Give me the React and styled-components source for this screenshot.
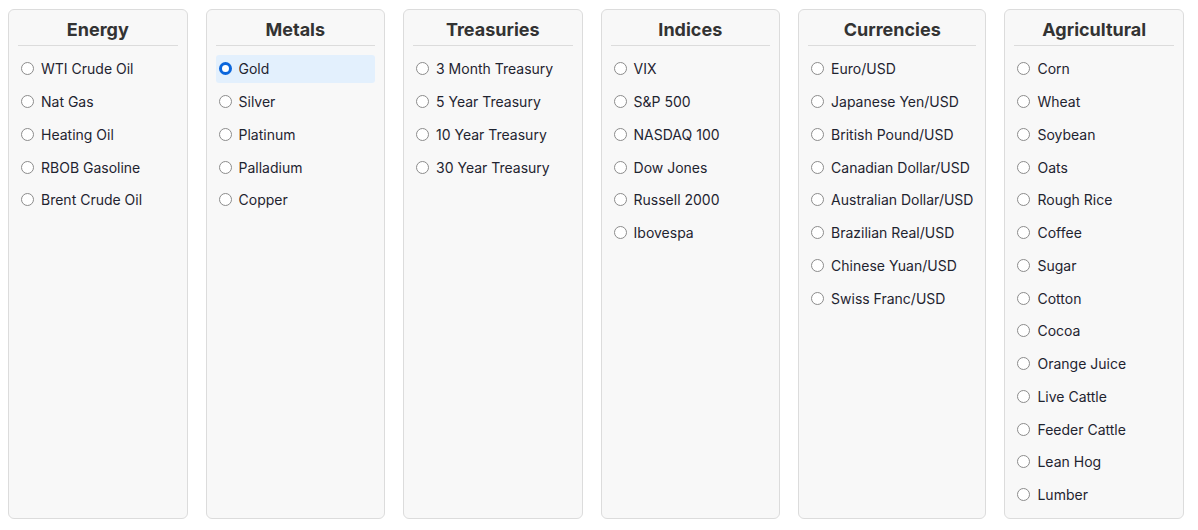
import React, { useState } from 'react';
import styled, { createGlobalStyle } from 'styled-components';

const GlobalStyles = createGlobalStyle`
  html, body {
    margin: 0;
    padding: 0;
    background: #fff;
  }
  body {
    font-family: Inter, "Noto Sans", "Liberation Sans", sans-serif;
    color: #1f2430;
  }
`;

const Board = styled.div`
  display: flex;
  gap: 18px;
  padding: 9px 14px 12px 8px;
  align-items: stretch;
`;

const Panel = styled.div`
  flex: 1 1 0;
  background: #f8f8f8;
  border: 1px solid #dcdcdc;
  border-radius: 6px;
  padding: 9px;
  display: flex;
  flex-direction: column;
`;

const Title = styled.h3`
  margin: 0;
  font-size: 18px;
  line-height: 22px;
  font-weight: 700;
  color: #333;
  text-align: center;
  padding-bottom: 4px;
  border-bottom: 1px solid #dcdcdc;
`;

const List = styled.div`
  display: flex;
  flex-direction: column;
  gap: 5px;
  margin-top: 9px;
`;

const Row = styled.label`
  display: flex;
  align-items: center;
  gap: 7px;
  height: 27.75px;
  padding: 0 3px;
  border-radius: 3px;
  font-size: 14px;
  color: #1f2430;
  white-space: nowrap;
  cursor: pointer;
  background: ${props => (props.$active ? '#e3f0fd' : 'transparent')};
`;

const Radio = styled.input`
  appearance: none;
  box-sizing: border-box;
  width: 13px;
  height: 13px;
  margin: 0;
  flex: none;
  border-radius: 50%;
  background: #fff;
  border: 1px solid #8c8c8c;

  &:checked {
    border: 3.5px solid #0b66dc;
  }
`;

const groups = [
  { title: 'Energy', items: ['WTI Crude Oil', 'Nat Gas', 'Heating Oil', 'RBOB Gasoline', 'Brent Crude Oil'] },
  { title: 'Metals', items: ['Gold', 'Silver', 'Platinum', 'Palladium', 'Copper'] },
  { title: 'Treasuries', items: ['3 Month Treasury', '5 Year Treasury', '10 Year Treasury', '30 Year Treasury'] },
  { title: 'Indices', items: ['VIX', 'S&P 500', 'NASDAQ 100', 'Dow Jones', 'Russell 2000', 'Ibovespa'] },
  {
    title: 'Currencies',
    items: ['Euro/USD', 'Japanese Yen/USD', 'British Pound/USD', 'Canadian Dollar/USD', 'Australian Dollar/USD', 'Brazilian Real/USD', 'Chinese Yuan/USD', 'Swiss Franc/USD']
  },
  {
    title: 'Agricultural',
    items: ['Corn', 'Wheat', 'Soybean', 'Oats', 'Rough Rice', 'Coffee', 'Sugar', 'Cotton', 'Cocoa', 'Orange Juice', 'Live Cattle', 'Feeder Cattle', 'Lean Hog', 'Lumber']
  }
];

export default function App() {
  const [selected, setSelected] = useState('Gold');

  return (
    <>
      <GlobalStyles />
      <Board>
        {groups.map(group => (
          <Panel key={group.title}>
            <Title>{group.title}</Title>
            <List>
              {group.items.map(item => (
                <Row key={item} $active={selected === item}>
                  <Radio
                    type="radio"
                    name="instrument"
                    checked={selected === item}
                    onChange={() => setSelected(item)}
                  />
                  {item}
                </Row>
              ))}
            </List>
          </Panel>
        ))}
      </Board>
    </>
  );
}
